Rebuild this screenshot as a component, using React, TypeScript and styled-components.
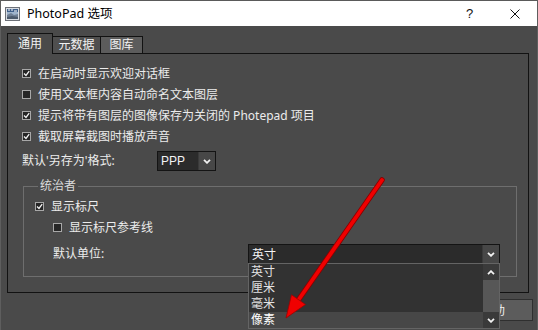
import React from "react";
import styled, { createGlobalStyle } from "styled-components";

const FONT = `"Noto Sans", "Noto Sans CJK SC", sans-serif`;

const Global = createGlobalStyle`
  html, body { margin: 0; padding: 0; background: #4a4a4a; overflow: hidden; }
  body { font-family: ${FONT}; }
`;

const Window = styled.div`
  position: relative;
  width: 538px;
  height: 330px;
  box-sizing: border-box;
  display: flex;
  flex-direction: column;
  overflow: hidden;
  background: #4a4a4a;
  border-left: 1px solid #5e5e5e;
  border-right: 1px solid #5e5e5e;
  font-family: ${FONT};
  font-size: 12px;
  color: #ececec;
`;

const TitleBar = styled.div`
  height: 26px;
  box-sizing: border-box;
  border-top: 1px solid #5a5a5a;
  background: #ffffff;
  display: flex;
  align-items: center;
  padding-left: 4px;
  color: #000;
  flex-shrink: 0;
`;

const TitleText = styled.span`
  margin-left: 7px;
  font-size: 12.5px;
  line-height: 16px;
  flex: 1;
`;

const CaptionButton = styled.div`
  width: 45px;
  height: 25px;
  display: flex;
  align-items: center;
  justify-content: center;
  font-family: "Liberation Sans", sans-serif;
  font-size: 13px;
  color: #111;
`;

const Body = styled.div`
  flex: 1;
  padding: 7px 8px 0 6px;
  display: flex;
  flex-direction: column;
`;

const TabStrip = styled.div`
  position: relative;
  z-index: 1;
  display: flex;
  align-items: flex-end;
  height: 20px;
`;

const Tab = styled.div<{ $w: number; $active?: boolean; $bg?: string }>`
  box-sizing: border-box;
  width: ${(p) => p.$w}px;
  height: ${(p) => (p.$active ? 21 : 17)}px;
  margin-bottom: ${(p) => (p.$active ? -1 : 0)}px;
  margin-left: ${(p) => (p.$active ? 0 : -1)}px;
  border: 1px solid #121212;
  border-bottom: none;
  background: ${(p) => p.$bg || "#4a4a4a"};
  display: flex;
  align-items: center;
  justify-content: center;
  line-height: 16px;
  color: #f2f2f2;
`;

const Panel = styled.div`
  box-sizing: border-box;
  height: 240px;
  border: 1px solid #121212;
  padding: 9px 0 0 14px;
  display: flex;
  flex-direction: column;
`;

const CheckRow = styled.div<{ $indent?: number }>`
  height: 21px;
  display: flex;
  align-items: center;
  gap: 7px;
  padding-left: ${(p) => p.$indent || 0}px;
  line-height: 16px;
  white-space: nowrap;
`;

const Box = styled.span`
  box-sizing: border-box;
  width: 9px;
  height: 9px;
  border: 1px solid #a8a8a8;
  background: #262626;
  display: flex;
  align-items: center;
  justify-content: center;
  flex-shrink: 0;
`;

const FieldRow = styled.div<{ $top: number; $indent?: number }>`
  height: 20px;
  margin-top: ${(p) => p.$top}px;
  padding-left: ${(p) => p.$indent || 0}px;
  display: flex;
  align-items: center;
`;

const FieldLabel = styled.span<{ $w: number }>`
  width: ${(p) => p.$w}px;
  line-height: 16px;
  white-space: nowrap;
`;

const SelectBox = styled.div<{ $w: number }>`
  position: relative;
  box-sizing: border-box;
  width: ${(p) => p.$w}px;
  height: 20px;
  display: flex;
  background: #2b2b2b;
  border: 1px solid #141414;
`;

const SelectValue = styled.span<{ $latin?: boolean }>`
  flex: 1;
  padding-left: 3px;
  display: flex;
  align-items: center;
  font-family: ${(p) => (p.$latin ? `"Liberation Sans", sans-serif` : FONT)};
  font-size: 12px;
  color: #f4f4f4;
`;

const SelectButton = styled.span`
  width: 16px;
  background: #474747;
  border-left: 1px solid #3a3a3a;
  display: flex;
  align-items: center;
  justify-content: center;
`;

const Group = styled.fieldset`
  margin: 8px 11px 0 1px;
  padding: 0 0 12px 11px;
  border: 1px solid #6e6e6e;
  min-width: 0;
  display: flex;
  flex-direction: column;
`;

const Legend = styled.legend`
  margin-left: 3px;
  padding: 0 2px;
  line-height: 14px;
  color: #dadada;
`;

const GroupRows = styled.div`
  margin-top: 3px;
  display: flex;
  flex-direction: column;
`;

const DropList = styled.div`
  position: absolute;
  z-index: 5;
  left: -1px;
  top: 100%;
  width: 252px;
  height: 66px;
  box-sizing: border-box;
  border: 1px solid #646464;
  background: #323232;
  display: flex;
`;

const Items = styled.div`
  flex: 1;
  display: flex;
  flex-direction: column;
`;

const Item = styled.div<{ $hl?: boolean }>`
  height: 16px;
  line-height: 16px;
  padding-left: 2px;
  background: ${(p) => (p.$hl ? "#474747" : "transparent")};
  color: ${(p) => (p.$hl ? "#ffffff" : "#e2e2e2")};
`;

const ScrollBar = styled.div`
  width: 16px;
  background: #3a3a3a;
  display: flex;
  flex-direction: column;
`;

const ScrollArrow = styled.div`
  height: 16px;
  display: flex;
  align-items: center;
  justify-content: center;
`;

const ScrollThumb = styled.div`
  flex: 1;
  background: #575757;
`;

const Footer = styled.div`
  margin-top: 6px;
  margin-right: -4px;
  display: flex;
  justify-content: flex-end;
  gap: 8px;
`;

const Button = styled.div`
  box-sizing: border-box;
  width: 80px;
  height: 22px;
  background: #5c5c5c;
  border: 1px solid #2f2f2f;
  display: flex;
  align-items: center;
  justify-content: center;
  color: #f0f0f0;
`;

const Overlay = styled.svg`
  position: absolute;
  left: 0;
  top: 0;
  z-index: 10;
  pointer-events: none;
`;

const Check = () => (
  <svg width="7" height="7" viewBox="0 0 7 7">
    <path d="M1 3.5 L3 5.5 L6.2 1.2" fill="none" stroke="#f4f4f4" strokeWidth="1.3" />
  </svg>
);

const Chevron = ({ up }: { up?: boolean }) => (
  <svg width="8" height="5" viewBox="0 0 8 5">
    <path
      d={up ? "M1 4.2 L4 1.2 L7 4.2" : "M1 0.8 L4 3.8 L7 0.8"}
      fill="none"
      stroke="#f2f2f2"
      strokeWidth="1.8"
    />
  </svg>
);

const AppIcon = () => (
  <svg width="15" height="14" viewBox="0 0 15 14">
    <rect x="0.5" y="0.5" width="14" height="13" fill="#d9dde3" stroke="#6c7077" />
    <rect x="2" y="2" width="11" height="10" fill="#9fb4cc" />
    <rect x="2" y="2" width="11" height="3" fill="#3f5f8a" />
    <path d="M3 3 h2 M6 3 h2 M9 4 h3" stroke="#ffffff" strokeWidth="1" />
    <path d="M2 12 L2 8 L6 6 L9 8 L13 7 L13 12 Z" fill="#6f7f94" />
    <path d="M2 12 L2 10 L7 9 L13 10 L13 12 Z" fill="#4c5a6c" />
  </svg>
);

const CloseIcon = () => (
  <svg width="10" height="10" viewBox="0 0 10 10">
    <path d="M0.5 0.5 L9.5 9.5 M9.5 0.5 L0.5 9.5" stroke="#111" strokeWidth="1" />
  </svg>
);

const CheckBox = ({ checked }: { checked?: boolean }) => <Box>{checked && <Check />}</Box>;

export default function App() {
  return (
    <>
      <Global />
      <Window>
        <TitleBar>
          <AppIcon />
          <TitleText>PhotoPad 选项</TitleText>
          <CaptionButton>?</CaptionButton>
          <CaptionButton>
            <CloseIcon />
          </CaptionButton>
        </TitleBar>
        <Body>
          <TabStrip>
            <Tab $w={46} $active>
              通用
            </Tab>
            <Tab $w={49} $bg="#4f4f4f">
              元数据
            </Tab>
            <Tab $w={43} $bg="#5c5c5c">
              图库
            </Tab>
          </TabStrip>
          <Panel>
            <CheckRow>
              <CheckBox checked />
              在启动时显示欢迎对话框
            </CheckRow>
            <CheckRow>
              <CheckBox />
              使用文本框内容自动命名文本图层
            </CheckRow>
            <CheckRow>
              <CheckBox checked />
              提示将带有图层的图像保存为关闭的 Photepad 项目
            </CheckRow>
            <CheckRow>
              <CheckBox checked />
              截取屏幕截图时播放声音
            </CheckRow>
            <FieldRow $top={4}>
              <FieldLabel $w={135}>默认'另存为'格式:</FieldLabel>
              <SelectBox $w={59}>
                <SelectValue $latin>PPP</SelectValue>
                <SelectButton>
                  <Chevron />
                </SelectButton>
              </SelectBox>
            </FieldRow>
            <Group>
              <Legend>统治者</Legend>
              <GroupRows>
                <CheckRow>
                  <CheckBox checked />
                  显示标尺
                </CheckRow>
                <CheckRow $indent={18}>
                  <CheckBox />
                  显示标尺参考线
                </CheckRow>
                <FieldRow $top={6} $indent={18}>
                  <FieldLabel $w={195}>默认单位:</FieldLabel>
                  <SelectBox $w={252}>
                    <SelectValue>英寸</SelectValue>
                    <SelectButton>
                      <Chevron />
                    </SelectButton>
                    <DropList>
                      <Items>
                        <Item>英寸</Item>
                        <Item>厘米</Item>
                        <Item>毫米</Item>
                        <Item $hl>像素</Item>
                      </Items>
                      <ScrollBar>
                        <ScrollArrow>
                          <Chevron up />
                        </ScrollArrow>
                        <ScrollThumb />
                        <ScrollArrow>
                          <Chevron />
                        </ScrollArrow>
                      </ScrollBar>
                    </DropList>
                  </SelectBox>
                </FieldRow>
              </GroupRows>
            </Group>
          </Panel>
          <Footer>
            <Button>确定</Button>
            <Button>取消</Button>
            <Button>帮助</Button>
          </Footer>
        </Body>
        <Overlay width="538" height="330" viewBox="0 0 538 330">
          <line x1="381" y1="180" x2="296" y2="302" stroke="#8a0000" strokeWidth="5.5" strokeLinecap="round" />
          <line x1="381" y1="180" x2="296" y2="302" stroke="#f00000" strokeWidth="3.8" strokeLinecap="round" />
          <polygon points="285,318 290.5,294.8 304.5,304.5" fill="#f00000" stroke="#a00000" strokeWidth="0.8" />
        </Overlay>
      </Window>
    </>
  );
}
